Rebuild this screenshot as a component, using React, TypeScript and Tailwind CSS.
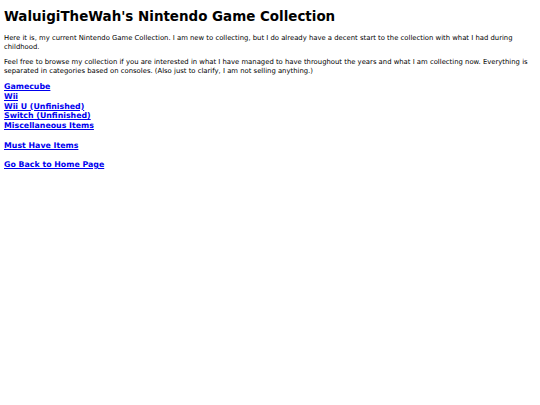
import React from 'react';

const links = ['Gamecube', 'Wii', 'Wii U (Unfinished)', 'Switch (Unfinished)', 'Miscellaneous Items'];

const App: React.FC = () => {
  return (
    <div className="min-h-[405px] bg-white pl-1 pr-[3px] pt-[9px] text-black font-['DejaVu_Sans',Verdana,sans-serif]">
      <h1 className="text-[13.45px] font-bold leading-[16px]">WaluigiTheWah's Nintendo Game Collection</h1>
      <p className="mt-[9px] text-[6.85px] leading-[8.5px]">
        Here it is, my current Nintendo Game Collection. I am new to collecting, but I do already have a decent start to the collection with what I had during childhood.
      </p>
      <p className="mt-[7px] text-[6.85px] leading-[8.5px]">
        Feel free to browse my collection if you are interested in what I have managed to have throughout the years and what I am collecting now. Everything is separated in categories based on consoles. (Also just to clarify, I am not selling anything.)
      </p>
      <div className="mt-[7px] flex flex-col items-start text-[7.85px] font-bold leading-[9.75px] text-[#0000ee]">
        {links.map((l) => (
          <a key={l} href="#" className="underline">{l}</a>
        ))}
        <a href="#" className="mt-[9.75px] underline">Must Have Items</a>
        <a href="#" className="mt-[9.75px] underline">Go Back to Home Page</a>
      </div>
    </div>
  );
};

export default App;
